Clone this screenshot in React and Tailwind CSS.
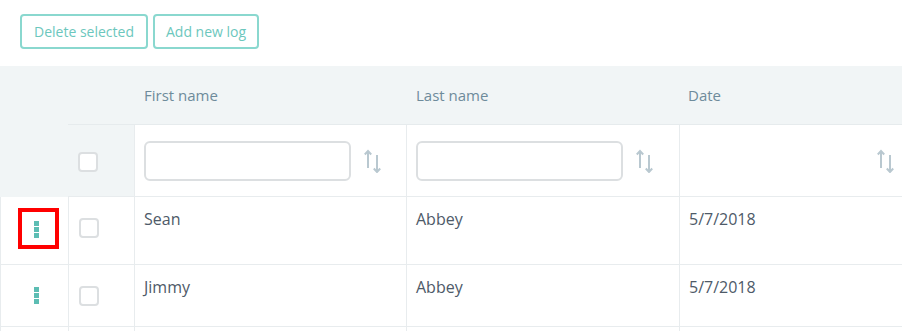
import React from "react";

const SortIcon = () => (
  <svg width="18" height="24" viewBox="0 0 18 24" fill="none" stroke="#b9c8d0" strokeWidth="2" strokeLinecap="butt">
    <path d="M4 19V2" />
    <path d="M0.8 5.5L4 2L7.2 5.5" />
    <path d="M13 6v17" />
    <path d="M9.8 19.5L13 23L16.2 19.5" />
  </svg>
);

const Checkbox = () => (
  <div className="w-[20px] h-[20px] rounded-[4px] border-2 border-[#dcdfe1] bg-white" />
);

const Kebab = () => (
  <div className="flex flex-col gap-[1px]">
    <div className="w-[5px] h-[5px] bg-[#5cbdb3]" />
    <div className="w-[5px] h-[5px] bg-[#5cbdb3]" />
    <div className="w-[5px] h-[5px] bg-[#5cbdb3]" />
  </div>
);

const rows = [
  { first: "Sean", last: "Abbey", date: "5/7/2018", h: "h-[68px]", marked: true },
  { first: "Jimmy", last: "Abbey", date: "5/7/2018", h: "h-[62px]", marked: false },
];

export default function App() {
  return (
    <div
      className="w-[902px] h-[331px] bg-white overflow-hidden"
      style={{ fontFamily: '"Open Sans", "Liberation Sans", sans-serif' }}
    >
      <div className="flex gap-[5px] pl-[20px] pt-[14px] h-[66px]">
        <button className="h-[35px] px-[12px] border-2 border-[#8ad8cf] rounded-[4px] text-[14px] text-[#6cc7bd] bg-white">
          Delete selected
        </button>
        <button className="h-[35px] px-[11px] border-2 border-[#8ad8cf] rounded-[4px] text-[14px] text-[#6cc7bd] bg-white">
          Add new log
        </button>
      </div>

      <div className="grid grid-cols-[68px_66px_272px_273px_240px] w-[919px]">
        {/* header row */}
        <div className="row-span-2 bg-[#f1f5f6]" />
        <div className="h-[59px] bg-[#f1f5f6] border-b border-[#e6ebed]" />
        <div className="h-[59px] bg-[#f1f5f6] border-b border-[#e6ebed] flex items-center pl-[10px] text-[15px] text-[#6e8b9b]">
          First name
        </div>
        <div className="h-[59px] bg-[#f1f5f6] border-b border-[#e6ebed] flex items-center pl-[10px] text-[15px] text-[#6e8b9b]">
          Last name
        </div>
        <div className="h-[59px] bg-[#f1f5f6] border-b border-[#e6ebed] flex items-center pl-[9px] text-[15px] text-[#6e8b9b]">
          Date
        </div>

        {/* filter row */}
        <div className="h-[72px] bg-[#f1f5f6] border-b border-[#e8ecee] flex items-center pl-[10px] pt-[2px]">
          <Checkbox />
        </div>
        <div className="h-[72px] bg-white border-b border-l border-[#e8ecee] flex items-center pl-[9px]">
          <div className="w-[207px] h-[40px] rounded-[6px] border-2 border-[#dcdfe1] bg-white" />
          <div className="ml-[13px] mt-[1px]">
            <SortIcon />
          </div>
        </div>
        <div className="h-[72px] bg-white border-b border-l border-[#e8ecee] flex items-center pl-[9px]">
          <div className="w-[207px] h-[40px] rounded-[6px] border-2 border-[#dcdfe1] bg-white" />
          <div className="ml-[13px] mt-[1px]">
            <SortIcon />
          </div>
        </div>
        <div className="h-[72px] bg-white border-b border-l border-[#e8ecee] flex items-center justify-end pr-[24px]">
          <div className="mt-[1px]">
            <SortIcon />
          </div>
        </div>

        {rows.map((r, i) => (
          <React.Fragment key={i}>
            <div className={`${r.h} border-b border-l border-[#e8ecee] bg-white flex justify-center items-start`}>
              {r.marked ? (
                <div className="mt-[11px] ml-[7px] w-[41px] h-[41px] border-[4px] border-[#ff0000] flex justify-center pt-[9px] pr-[3px]">
                  <Kebab />
                </div>
              ) : (
                <div className="mt-[22px] mr-[0px] ml-[7px] pr-[3px] w-[41px] flex justify-center">
                  <Kebab />
                </div>
              )}
            </div>
            <div className={`${r.h} border-b border-l border-[#e8ecee] bg-white pl-[10px] pt-[21px]`}>
              <Checkbox />
            </div>
            <div className={`${r.h} border-b border-l border-[#e8ecee] bg-white pl-[9px] pt-[10px] text-[16px] leading-[24px] text-[#4e5a68]`}>
              {r.first}
            </div>
            <div className={`${r.h} border-b border-l border-[#e8ecee] bg-white pl-[9px] pt-[10px] text-[16px] leading-[24px] text-[#4e5a68]`}>
              {r.last}
            </div>
            <div className={`${r.h} border-b border-l border-[#e8ecee] bg-white pl-[9px] pt-[10px] text-[16px] leading-[24px] text-[#4e5a68]`}>
              {r.date}
            </div>
          </React.Fragment>
        ))}
        <div className="h-[10px] border-l border-[#e8ecee]" />
        <div className="h-[10px] border-l border-[#e8ecee]" />
        <div className="h-[10px] border-l border-[#e8ecee]" />
        <div className="h-[10px] border-l border-[#e8ecee]" />
        <div className="h-[10px] border-l border-[#e8ecee]" />
      </div>
    </div>
  );
}
